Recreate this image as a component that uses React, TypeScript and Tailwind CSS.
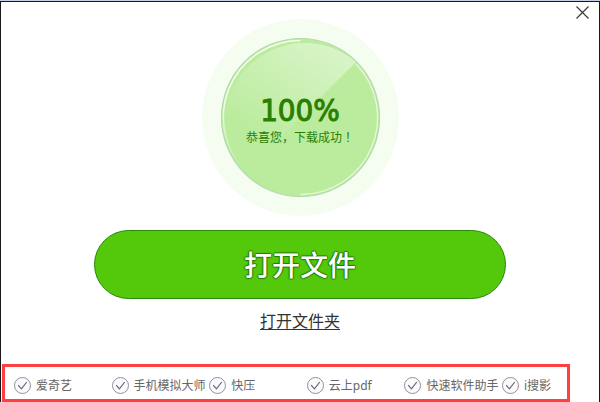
import React from "react";

const offers = ["爱奇艺", "手机模拟大师", "快压", "云上pdf", "快速软件助手", "i搜影"];

function CloseButton() {
  return (
    <button type="button" aria-label="关闭" className="flex size-[13px] cursor-pointer">
      <svg viewBox="0 0 13 13" className="size-[13px]" fill="none" stroke="#3a3a3a" strokeWidth="1.2">
        <path d="M0.5 0.5 12.5 12.5M12.5 0.5 0.5 12.5" />
      </svg>
    </button>
  );
}

function ProgressDial() {
  return (
    <div className="grid size-[197px] place-items-center">
      <svg viewBox="0 0 197 197" className="col-start-1 row-start-1 size-[197px]" fill="none" aria-hidden="true">
        <defs>
          <linearGradient id="shine" x1="140" y1="30" x2="72" y2="128" gradientUnits="userSpaceOnUse">
            <stop offset="0" stopColor="#fff" stopOpacity="0.44" />
            <stop offset="1" stopColor="#fff" stopOpacity="0" />
          </linearGradient>
          <linearGradient id="rim" x1="60" y1="22" x2="40" y2="150" gradientUnits="userSpaceOnUse">
            <stop offset="0" stopColor="#f5fdf0" />
            <stop offset="0.5" stopColor="#f5fdf0" />
            <stop offset="1" stopColor="#f5fdf0" stopOpacity="0" />
          </linearGradient>
        </defs>
        <circle cx="98.5" cy="98.5" r="98.5" fill="#f4fdf0" />
        <circle cx="98.5" cy="98.5" r="79" fill="#bbec9e" stroke="#b5d9ac" strokeWidth="1.2" />
        <path d="M154 43 98.5 98.5 42.6 154.4A79 79 0 0 1 154 43Z" fill="url(#shine)" />
        <path d="M98.5 21.5A77 77 0 0 0 44 153" stroke="url(#rim)" strokeWidth="1.5" />
        <path d="M98.5 175.5A77 77 0 0 0 154 45" stroke="#e6f8da" strokeWidth="1.3" />
      </svg>
      <div className="col-start-1 row-start-1 flex flex-col items-center pt-1.5 text-[#2b7f00]">
        <p className="font-['DejaVu_Sans_Condensed','DejaVu_Sans',sans-serif] text-[31px] leading-8 [-webkit-text-stroke:1px_#2b7f00]">
          100%
        </p>
        <p className="pt-px font-['Noto_Sans_CJK_JP',sans-serif] text-xs leading-5">恭喜您，下载成功！</p>
      </div>
    </div>
  );
}

function Offer({ name }: { name: string }) {
  return (
    <label className="flex items-center gap-[5px] whitespace-nowrap">
      <span className="grid size-[17px] shrink-0">
        <input
          type="checkbox"
          defaultChecked
          className="peer col-start-1 row-start-1 size-[17px] appearance-none rounded-full border border-[#909096] bg-[#fafaff]"
        />
        <svg
          viewBox="0 0 17 17"
          className="pointer-events-none invisible col-start-1 row-start-1 size-[17px] peer-checked:visible"
          fill="none"
          stroke="#66666c"
          strokeWidth="1.2"
          aria-hidden="true"
        >
          <path d="M4.2 8.2 7.4 11.8 12.8 5" />
        </svg>
      </span>
      <span className="pt-0.5">{name}</span>
    </label>
  );
}

export default function App() {
  return (
    <div className="border-t border-[#c3d0e6] bg-white pb-0.5 font-['Noto_Sans','Noto_Sans_CJK_SC',sans-serif]">
      <main className="border-x border-t border-[#17171c]">
        <header className="flex h-[17px] items-end justify-end pr-[10px]">
          <CloseButton />
        </header>
        <section className="flex flex-col items-center">
          <ProgressDial />
          <button
            type="button"
            className="mt-[14px] h-[69px] w-[412px] max-w-full cursor-pointer rounded-full border border-[#278a0b] bg-[#54c80a] pb-0.5 font-['Noto_Sans_CJK_SC',sans-serif] text-[28px] font-medium leading-8 text-white [text-shadow:1px_0_1px_#1f7d08,-1px_0_1px_#1f7d08,0_1px_1px_#1f7d08,0_-1px_1px_#1f7d08]"
          >
            打开文件
          </button>
          <a href="#folder" className="mt-[10px] text-base leading-6 text-[#333] underline underline-offset-2">
            打开文件夹
          </a>
        </section>
        <section className="-mb-0.5 ml-px mr-[29px] mt-[31px] grid h-[38px] grid-cols-[repeat(5,minmax(0,1fr))_56px] items-center border-3 border-[#ff4040] px-[9px] pt-1 text-xs leading-4 text-[#666]">
          {offers.map((name) => (
            <Offer key={name} name={name} />
          ))}
        </section>
      </main>
    </div>
  );
}
